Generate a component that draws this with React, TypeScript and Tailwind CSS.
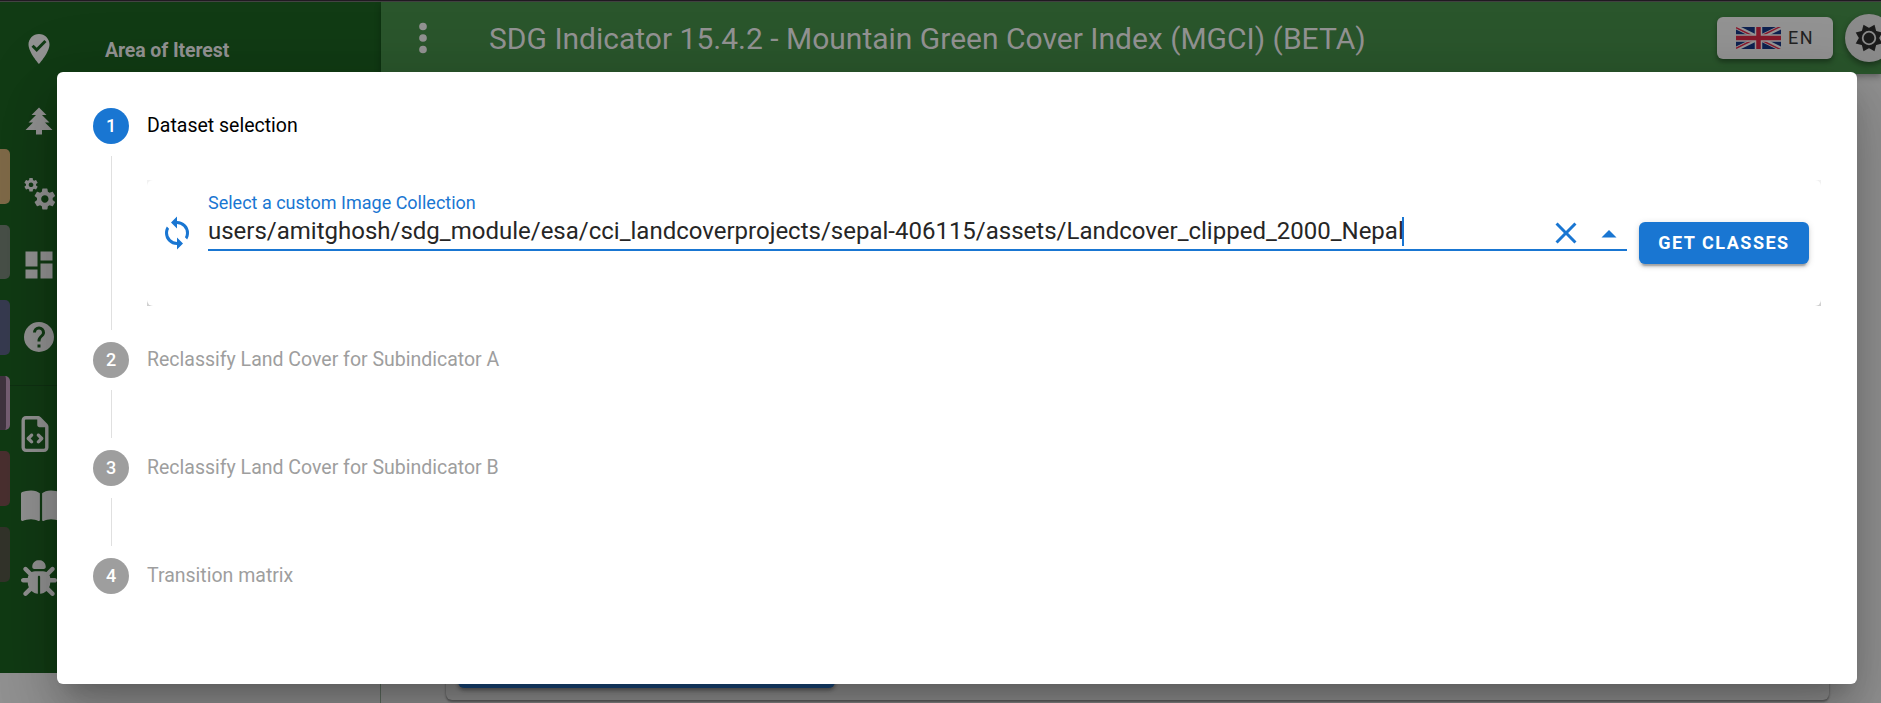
import React from "react";
import { FaRegFileCode, FaBookOpen, FaBug } from "react-icons/fa6";

const P = {
  marker:
    "M12,2C15.86,2 19,5.14 19,9C19,14.25 12,22 12,22C12,22 5,14.25 5,9C5,5.14 8.14,2 12,2M10.47,14L17,7.41L15.6,6L10.47,11.18L8.4,9.09L7,10.5L10.47,14Z",
  tree: "M10,21V18H3L8,13H5L10,8H7L12,3L17,8H14L19,13H16L21,18H14V21H10Z",
  cogs: "M15.9,18.45C17.25,18.45 18.35,17.35 18.35,16C18.35,14.65 17.25,13.55 15.9,13.55C14.54,13.55 13.45,14.65 13.45,16C13.45,17.35 14.54,18.45 15.9,18.45M21.1,16.68L22.58,17.84C22.71,17.95 22.75,18.13 22.66,18.29L21.26,20.71C21.17,20.86 21,20.92 20.83,20.86L19.09,20.16C18.73,20.44 18.33,20.67 17.91,20.85L17.64,22.7C17.62,22.87 17.47,23 17.3,23H14.5C14.32,23 14.18,22.87 14.15,22.7L13.89,20.85C13.46,20.67 13.07,20.44 12.71,20.16L10.96,20.86C10.81,20.92 10.62,20.86 10.54,20.71L9.14,18.29C9.05,18.13 9.09,17.95 9.22,17.84L10.7,16.68L10.65,16L10.7,15.31L9.22,14.16C9.09,14.05 9.05,13.86 9.14,13.71L10.54,11.29C10.62,11.13 10.81,11.07 10.96,11.13L12.71,11.84C13.07,11.56 13.46,11.32 13.89,11.15L14.15,9.29C14.18,9.13 14.32,9 14.5,9H17.3C17.47,9 17.62,9.13 17.64,9.29L17.91,11.15C18.33,11.32 18.73,11.56 19.09,11.84L20.83,11.13C21,11.07 21.17,11.13 21.26,11.29L22.66,13.71C22.75,13.86 22.71,14.05 22.58,14.16L21.1,15.31L21.15,16L21.1,16.68M6.69,8.07C7.56,8.07 8.26,7.37 8.26,6.5C8.26,5.63 7.56,4.92 6.69,4.92A1.58,1.58 0 0,0 5.11,6.5C5.11,7.37 5.82,8.07 6.69,8.07M10.03,6.94L11,7.68C11.07,7.75 11.09,7.87 11.03,7.97L10.13,9.53C10.08,9.63 9.96,9.67 9.86,9.63L8.74,9.18L8,9.62L7.81,10.81C7.79,10.92 7.7,11 7.59,11H5.79C5.67,11 5.58,10.92 5.56,10.81L5.4,9.62L4.64,9.18L3.52,9.63C3.41,9.67 3.3,9.63 3.24,9.53L2.34,7.97C2.28,7.87 2.31,7.75 2.39,7.68L3.34,6.94L3.31,6.5L3.34,6.06L2.39,5.32C2.31,5.25 2.28,5.13 2.34,5.03L3.24,3.47C3.3,3.37 3.41,3.33 3.52,3.37L4.63,3.82L5.4,3.38L5.56,2.19C5.58,2.08 5.67,2 5.79,2H7.59C7.7,2 7.79,2.08 7.81,2.19L8,3.38L8.74,3.82L9.86,3.37C9.96,3.33 10.08,3.37 10.13,3.47L11.03,5.03C11.09,5.13 11.07,5.25 11,5.32L10.03,6.06L10.06,6.5L10.03,6.94Z",
  dashboard: "M13,3V9H21V3M13,21H21V11H13M3,21H11V15H3M3,13H11V3H3V13Z",
  help: "M15.07,11.25L14.17,12.17C13.45,12.89 13,13.5 13,15H11V14.5C11,13.39 11.45,12.39 12.17,11.67L13.41,10.41C13.78,10.05 14,9.55 14,9C14,7.89 13.1,7 12,7A2,2 0 0,0 10,9H8A4,4 0 0,1 12,5A4,4 0 0,1 16,9C16,9.88 15.64,10.67 15.07,11.25M13,19H11V17H13M12,2A10,10 0 0,0 2,12A10,10 0 0,0 12,22A10,10 0 0,0 22,12C22,6.47 17.5,2 12,2Z",
  dots: "M12,16A2,2 0 0,1 14,18A2,2 0 0,1 12,20A2,2 0 0,1 10,18A2,2 0 0,1 12,16M12,10A2,2 0 0,1 14,12A2,2 0 0,1 12,14A2,2 0 0,1 10,12A2,2 0 0,1 12,10M12,4A2,2 0 0,1 14,6A2,2 0 0,1 12,8A2,2 0 0,1 10,6A2,2 0 0,1 12,4Z",
  sync: "M12,18A6,6 0 0,1 6,12C6,11 6.25,10.03 6.7,9.2L5.24,7.74C4.46,8.97 4,10.43 4,12A8,8 0 0,0 12,20V23L16,19L12,15V18M12,4V1L8,5L12,9V6A6,6 0 0,1 18,12C18,13 17.75,13.97 17.3,14.8L18.76,16.26C19.54,15.03 20,13.57 20,12A8,8 0 0,0 12,4Z",
  close:
    "M19,6.41L17.59,5L12,10.59L6.41,5L5,6.41L10.59,12L5,17.59L6.41,19L12,13.41L17.59,19L19,17.59L13.41,12L19,6.41Z",
  up: "M7,15L12,10L17,15H7Z",
};

function Mdi({ d, className = "size-9" }: { d: string; className?: string }) {
  return (
    <svg viewBox="0 0 24 24" className={`shrink-0 ${className}`} fill="currentColor">
      <path fillRule="evenodd" d={d} />
    </svg>
  );
}

function Sun() {
  const spikes = Array.from({ length: 8 }, (_, i) => i * 45 + 22.5);
  return (
    <svg viewBox="-12 -12 24 24" className="size-9" fill="#1c1c1c">
      {spikes.map((a) => (
        <path key={a} d="M-2.9,-5.8L0,-9.6L2.9,-5.8Z" transform={`rotate(${a})`} />
      ))}
      <circle r="6.6" />
      <circle r="4.2" fill="none" stroke="#8b8b8b" strokeWidth="1.2" />
    </svg>
  );
}

function Flag() {
  return (
    <svg viewBox="0 0 60 30" preserveAspectRatio="none" className="h-[22px] w-[45px]">
      <rect width="60" height="30" fill="#0e2150" />
      <path d="M0,0L60,30M60,0L0,30" stroke="#959595" strokeWidth="6" />
      <path d="M0,0L30,15M60,30L30,15" stroke="#8a1a2e" strokeWidth="2" transform="translate(0,1)" />
      <path d="M60,0L30,15M0,30L30,15" stroke="#8a1a2e" strokeWidth="2" transform="translate(0,-1)" />
      <path d="M30,0V30M0,15H60" stroke="#959595" strokeWidth="10" />
      <path d="M30,0V30M0,15H60" stroke="#85182a" strokeWidth="6" />
    </svg>
  );
}

const tabs = [
  "h-[55px] bg-[#7f6a48]",
  "h-[54px] bg-[#485048]",
  "h-[55px] bg-[#373b50]",
  "h-[54px] border-r-4 border-[#765f73] bg-[#40343f]",
  "h-[55px] bg-[#4a3030]",
  "h-[55px] bg-[#33342b]",
];

function Step({ n, label, active = false }: { n: number; label: string; active?: boolean }) {
  return (
    <div className="flex h-9 items-start">
      <span
        className={`flex size-9 items-center justify-center rounded-full pb-px text-[18px] font-medium text-white ${active ? "bg-[#1976d2]" : "bg-[#9e9e9e]"}`}
      >
        {n}
      </span>
      <span
        className={`ml-[18px] text-[19.5px] leading-[36px] ${active ? "text-black" : "text-[#9e9e9e]"}`}
      >
        {label}
      </span>
    </div>
  );
}

export default function App() {
  return (
    <div className="relative flex h-[703px] w-[1881px] flex-col overflow-hidden bg-[#929292] font-['Roboto',sans-serif]">
      <div className="h-px bg-[#211a22]" />
      <div className="h-px bg-[#434343]" />
      <div className="flex min-h-0 flex-1">
        <aside className="flex w-[381px] shrink-0 flex-col border-r border-[#5f6e60]">
          <div className="-mr-px flex h-[671px] shrink-0 bg-[#113b14]">
            <div className="flex w-[10px] flex-col gap-[21px] pt-[147px]">
              {tabs.map((t) => (
                <div key={t} className={`w-[10px] shrink-0 rounded-r-[5px] ${t}`} />
              ))}
            </div>
            <nav className="flex flex-1 flex-col pl-[11px] pt-[11px] text-[#939393]">
              <div className="flex h-[72px] items-center">
                <Mdi d={P.marker} />
                <span className="ml-[48px] pt-[4px] text-[19.5px] font-bold tracking-[-0.1px]">Area of Iterest</span>
              </div>
              <div className="flex h-[72px] items-center"><Mdi d={P.tree} /></div>
              <div className="flex h-[72px] items-center"><Mdi d={P.cogs} /></div>
              <div className="flex h-[72px] items-center"><Mdi d={P.dashboard} /></div>
              <div className="flex h-[72px] items-center"><Mdi d={P.help} /></div>
              <div className="-ml-[11px] mt-[12px] h-px bg-[#0f3112]" />
              <div className="mt-[12px] flex h-[72px] items-center"><FaRegFileCode size={36} className="-ml-[4.5px]" /></div>
              <div className="flex h-[72px] items-center"><FaBookOpen size={36} className="w-[40px]" /></div>
              <div className="flex h-[72px] items-center"><FaBug size={36} /></div>
            </nav>
          </div>
        </aside>
        <main className="flex flex-1 flex-col">
          <header className="flex h-[72px] shrink-0 items-start bg-[#2a562c] text-[#939393] shadow-[0_3px_6px_rgba(0,0,0,0.3)]">
            <Mdi d={P.dots} className="ml-[19px] mt-[13px] size-[46px]" />
            <h1 className="ml-[43px] mt-[15px] whitespace-nowrap text-[30px] leading-[44px]">
              SDG Indicator 15.4.2 - Mountain Green Cover Index (MGCI) (BETA)
            </h1>
            <div className="ml-auto mr-[-12px] mt-[12px] flex shrink-0 items-center gap-3">
              <div className="flex h-[42px] w-[116px] items-center rounded-[6px] bg-[#939393] pl-[19px] text-[18px] tracking-[1.6px] text-[#222] shadow-[0_3px_5px_rgba(0,0,0,0.35)]">
                <Flag />
                <span className="ml-[7px] pb-px">EN</span>
              </div>
              <div className="flex size-12 items-center justify-center rounded-full bg-[#8b8b8b] shadow-[0_3px_6px_rgba(0,0,0,0.4)]">
                <Sun />
              </div>
            </div>
          </header>
          <div className="ml-[65px] flex h-[626px] w-[1383px] shrink-0 items-end rounded-[6px] pb-[12px] pl-[12px] shadow-[0_2px_2px_rgba(0,0,0,0.3),0_0_3px_rgba(0,0,0,0.2)]">
            <div className="h-[42px] w-[377px] rounded-[6px] bg-[#194a80] shadow-[0_2px_4px_rgba(0,0,0,0.4)]" />
          </div>
        </main>
      </div>

      <div
        role="dialog"
        className="absolute left-[57px] top-[72px] flex h-[612px] w-[1800px] flex-col rounded-[6px] bg-white p-9 shadow-[0_16.5px_22.5px_-10.5px_rgba(0,0,0,0.2),0_36px_57px_4.5px_rgba(0,0,0,0.14),0_13.5px_69px_12px_rgba(0,0,0,0.12)]"
      >
        <Step n={1} label="Dataset selection" active />
        <div className="ml-[18px] mt-3 flex h-[174px] border-l border-[#e0e0e0] pl-[35px]">
          <div className="mt-[24px] h-[126px] flex-1 bg-[linear-gradient(#f2f2f2,#d0d0d0)]">
            <div className="flex h-full items-start rounded-[6px] bg-white pl-[12px]">
              <Mdi d={P.sync} className="mt-[35px] size-[36px] text-[#1976d2]" />
              <div className="ml-[13px] mt-[10px] flex h-[61px] w-[1419px] shrink-0 flex-col border-b-2 border-[#1976d2]">
                <span className="pt-px text-[18px] leading-[24px] text-[#1976d2]">Select a custom Image Collection</span>
                <div className="-mt-[2px] flex h-9 items-center text-[#262626]">
                  <span className="whitespace-nowrap text-[24px]">
                    users/amitghosh/sdg_module/esa/cci_landcoverprojects/sepal-406115/assets/Landcover_clipped_2000_Nepal
                  </span>
                  <span className="-ml-[2px] h-[29px] w-[2px] bg-[#1976d2]" />
                  <Mdi d={P.close} className="ml-auto mr-[7px] mt-[4px] size-9 text-[#1976d2]" />
                  <Mdi d={P.up} className="mt-[4px] size-9 text-[#1976d2]" />
                </div>
              </div>
              <button className="ml-3 mt-[42px] h-[42px] w-[170px] shrink-0 whitespace-nowrap rounded-[6px] bg-[#1976d2] pb-[2px] text-[18px] font-bold tracking-[1.5px] text-white shadow-[0_4.5px_1.5px_-3px_rgba(0,0,0,0.2),0_3px_3px_rgba(0,0,0,0.14),0_1.5px_7.5px_rgba(0,0,0,0.12)]">
                GET CLASSES
              </button>
            </div>
          </div>
        </div>
        <div className="h-3" />
        <Step n={2} label="Reclassify Land Cover for Subindicator A" />
        <div className="my-3 ml-[18px] h-12 border-l border-[#e0e0e0]" />
        <Step n={3} label="Reclassify Land Cover for Subindicator B" />
        <div className="my-3 ml-[18px] h-12 border-l border-[#e0e0e0]" />
        <Step n={4} label="Transition matrix" />
      </div>
    </div>
  );
}
